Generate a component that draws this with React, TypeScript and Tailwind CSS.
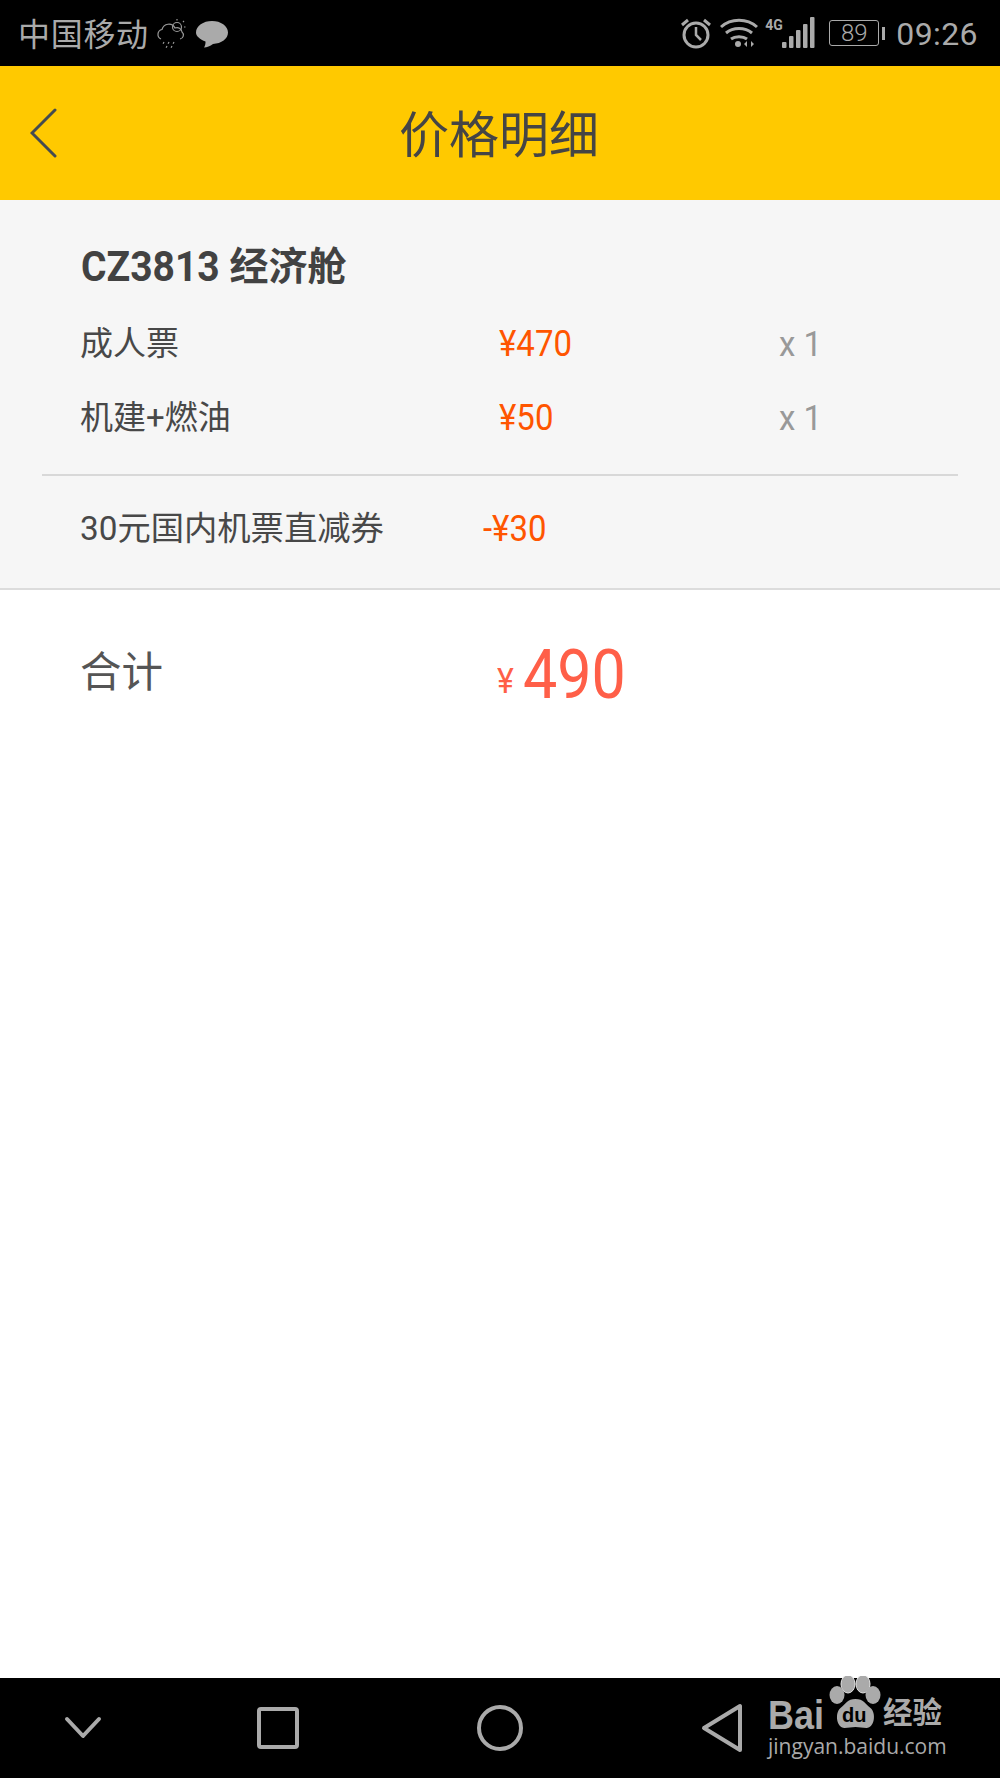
import React from "react";

const cjk = '"Roboto", "Noto Sans CJK SC", sans-serif';

function StatusLeft() {
  return (
    <div className="flex items-center">
      <span className="text-[32px] leading-none text-[#aaaaaa] w-[135px] tracking-[0.7px] mt-[3px]">中国移动</span>
      <svg width="30" height="32" viewBox="0 0 30 32" fill="none" stroke="#999" strokeWidth="1.2" className="ml-[3px] mt-[1px]">
        <path d="M5 21 a5 5 0 0 1 1-9.5 a7 7 0 0 1 13-1.5 a5 5 0 0 1 7 4 a4 4 0 0 1-2 7" />
        <circle cx="21" cy="9" r="4.5" />
        <path d="M21 1v1.5M28 3l-1 1M29.5 9h-1.5" />
        <path d="M8 24l-1 2M13 24l-1 2M18 24l-1 2M11 28l-1 2M16 28l-1 2" strokeDasharray="2 1" />
      </svg>
      <svg width="32" height="30" viewBox="0 0 32 30" className="ml-[10px] mt-[1px]">
        <path fill="#aaaaaa" d="M16 2c8.8 0 16 4.9 16 11.5 0 6.4-6.6 11-15 11.500-3 2.200-6 3.500-9 3.500 1-1.500 1.700-4 1.500-6C4 20.300 0 17.300 0 13.500 0 6.900 7.200 2 16 2z" />
      </svg>
    </div>
  );
}

function StatusRight() {
  return (
    <div className="flex items-center text-[#aaaaaa]">
      <svg width="32" height="32" viewBox="0 0 32 32" fill="none" stroke="#aaaaaa" strokeWidth="3">
        <circle cx="16" cy="18" r="12" />
        <path d="M16 10v8l5 5" strokeWidth="2.500" />
        <path d="M2 8l6-5M30 8l-6-5" />
      </svg>
      <svg width="38" height="32" viewBox="0 0 38 32" fill="none" stroke="#aaaaaa" strokeWidth="3" className="ml-[8px]">
        <path d="M1 10c10-9 26-9 36 0" />
        <path d="M6 16c7-6 19-6 26 0" />
        <path d="M11 22c4-3 12-3 16 0" />
        <circle cx="18" cy="27" r="3" fill="#aaaaaa" stroke="none" />
        <path d="M27 30v-6l-3 3zM31 24v6l3-3z" fill="#aaaaaa" stroke="none" />
      </svg>
      <div className="relative w-[50px] h-[34px] ml-[7px]">
        <span className="absolute left-0 top-[1px] text-[14px] leading-[16px] font-bold" style={{ fontFamily: '"Roboto", sans-serif' }}>4G</span>
        <svg width="33" height="32" viewBox="0 0 33 32" className="absolute left-[17px] top-[1px]" fill="#aaaaaa">
          <rect x="0" y="25" width="4.500" height="6" rx="1" />
          <rect x="7" y="19" width="4.500" height="12" rx="1" />
          <rect x="14" y="13" width="4.500" height="18" rx="1" />
          <rect x="21" y="7" width="4.500" height="24" rx="1" />
          <rect x="28" y="0" width="4.500" height="31" rx="1" />
        </svg>
      </div>
      <div className="ml-[14px] w-[50px] h-[26px] border border-[#aaaaaa] rounded-[3px] flex items-center justify-center text-[24px] leading-none font-light">89</div>
      <div className="w-[3px] h-[13px] bg-[#aaaaaa] ml-[3px]" />
      <span className="ml-[11px] text-[32px] leading-none tracking-[0.4px] mt-[2px]">09:26</span>
    </div>
  );
}

function Row({ label, price, qty }: { label: string; price: string; qty: string }) {
  return (
    <div className="flex items-center h-[74px] pl-[80px]">
      <span className="w-[419px] text-[33px] leading-none text-[#484848] mt-[1px]">{label}</span>
      <span className="w-[280px] text-[33px] leading-none text-[#ff5500] mt-[1px] scale-y-[1.1]">{price}</span>
      <span className="text-[33px] leading-none text-[#999999] mt-[1px] scale-y-[1.05]">{qty}</span>
    </div>
  );
}

function Watermark() {
  return (
    <div className="absolute left-[766px] top-[1676px] w-[190px] h-[90px] text-[#aaaaaa]">
      <svg width="70" height="56" viewBox="0 0 70 56" className="absolute left-[54px] top-0">
        <ellipse cx="28" cy="8" rx="7" ry="9" fill="#aaaaaa" stroke="#e4e4e4" strokeWidth="1" />
        <ellipse cx="43" cy="8" rx="7" ry="9" fill="#aaaaaa" stroke="#e4e4e4" strokeWidth="1" />
        <ellipse cx="17" cy="19" rx="7.5" ry="9" fill="#aaaaaa" />
        <ellipse cx="53" cy="19" rx="7.5" ry="9" fill="#aaaaaa" />
        <path fill="#aaaaaa" d="M35.500 23c8 0 10 5 15 9 6 5 4 20-4 20-4 0-7-1-11-1s-7 1-11 1c-8 0-10-15-4-20 5-4 7-9 15-9z" />
      </svg>
      <span className="absolute left-[2px] top-[24px] text-[36px] leading-[30px] font-bold scale-y-[1.15]" style={{ fontFamily: '"Liberation Sans", sans-serif' }}>Bai</span>
      <span className="absolute left-[76px] top-[29px] text-[20px] leading-[20px] font-bold text-black" style={{ fontFamily: '"Liberation Sans", sans-serif' }}>du</span>
      <span className="absolute left-[117px] top-[21px] text-[29.500px] leading-[32px] font-bold whitespace-nowrap">经验</span>
      <span className="absolute left-[2px] top-[58px] text-[21px] leading-[24px] whitespace-nowrap" style={{ fontFamily: '"Open Sans", sans-serif' }}>jingyan.baidu.com</span>
    </div>
  );
}

export default function App() {
  return (
    <div className="relative w-[1000px] h-[1778px] flex flex-col bg-white overflow-hidden" style={{ fontFamily: cjk }}>
      <div className="h-[66px] bg-black flex items-center justify-between pl-[18px] pr-[22px] shrink-0">
        <StatusLeft />
        <StatusRight />
      </div>
      <div className="relative h-[134px] bg-[#ffc900] flex items-center justify-center shrink-0">
        <svg width="28" height="52" viewBox="0 0 28 52" fill="none" stroke="#444b50" strokeWidth="3" strokeLinecap="round" className="absolute left-[30px] top-[41px]">
          <path d="M25 3 L2 26 L25 49" />
        </svg>
        <span className="text-[50px] leading-none text-[#454545] pt-[6px] pr-[2px]">价格明细</span>
      </div>
      <div className="bg-[#f6f6f6] border-b-2 border-[#dcdcdc] pt-[40px] pb-[36px] shrink-0">
        <div className="h-[66px] pl-[81px] text-[39px] leading-[54px] font-bold text-[#424242]">
          <span className="inline-block scale-y-[1.08]">CZ3813</span> 经济舱
        </div>
        <Row label="成人票" price="¥470" qty="x 1" />
        <Row label="机建+燃油" price="¥50" qty="x 1" />
        <div className="mx-[42px] mt-[20px] border-t-2 border-[#d8d8d8]" />
        <div className="flex items-center h-[48px] mt-[28px] pl-[80px]">
          <span className="w-[403px] text-[33.300px] leading-none text-[#484848] mt-[1px]">30元国内机票直减券</span>
          <span className="text-[33px] leading-none text-[#ff5500] scale-y-[1.1]">-¥30</span>
        </div>
      </div>
      <div className="flex items-center h-[166px] pl-[80px] shrink-0">
        <span className="w-[417px] text-[41.500px] leading-none text-[#555555]">合计</span>
        <span className="w-[26px] text-[32px] leading-none text-[#ff5f48] mt-[16px] scale-y-[1.1]">¥</span>
        <span className="text-[61px] leading-none text-[#ff5f48] scale-y-[1.12] mt-[4px]">490</span>
      </div>
      <div className="flex-1" />
      <div className="h-[100px] bg-black shrink-0 flex items-center pl-[64px]">
        <svg width="38" height="24" viewBox="0 0 38 24" fill="none" stroke="#aaaaaa" strokeWidth="4" strokeLinecap="round" strokeLinejoin="round">
          <path d="M3 3 L19 20 L35 3" />
        </svg>
        <div className="ml-[155px] w-[42px] h-[42px] border-[4px] border-[#aaaaaa] rounded-[4px]" />
        <div className="ml-[178px] w-[46px] h-[46px] border-[4px] border-[#aaaaaa] rounded-full" />
        <svg width="42" height="50" viewBox="0 0 42 50" fill="none" stroke="#aaaaaa" strokeWidth="4" strokeLinejoin="round" className="ml-[178px]">
          <path d="M3 25 L39 3 V47 Z" />
        </svg>
      </div>
      <Watermark />
    </div>
  );
}
